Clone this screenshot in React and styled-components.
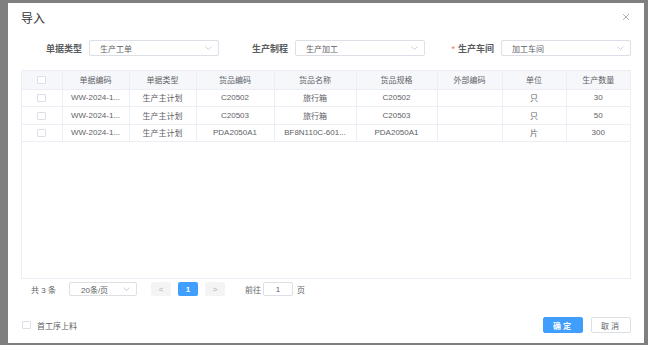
import React from 'react';
import styled, { createGlobalStyle } from 'styled-components';

const GlobalStyle = createGlobalStyle`
    html, body {
        margin: 0;
        padding: 0;
        height: 345px;
        overflow: hidden;
        background: #7f7f7f;
        font-family: "Liberation Sans", "Noto Sans CJK SC", sans-serif;
    }
    * { box-sizing: border-box; }
`;

const Overlay = styled.div`
    padding: 3px 0 0 8px;
    height: 345px;
`;

const Dialog = styled.div`
    width: 636px;
    height: 340px;
    background: #fff;
    display: flex;
    flex-direction: column;
`;

const Header = styled.div`
    height: 27px;
    padding: 0 14px 0 13px;
    display: flex;
    align-items: center;
    justify-content: space-between;
`;

const Title = styled.span`
    font-size: 12px;
    color: #303133;
    padding-top: 2px;
`;

const Close = styled.svg`
    width: 8px;
    height: 8px;
`;

const Body = styled.div`
    padding: 10px 13px 0;
`;

const FormRow = styled.div`
    display: flex;
    gap: 8px;
    height: 16px;
    margin-bottom: 14px;
`;

const FormItem = styled.div`
    display: flex;
    align-items: center;
`;

const Label = styled.label`
    width: 68px;
    padding-right: 7px;
    text-align: right;
    font-size: 9px;
    font-weight: 600;
    color: #5a5c61;
    white-space: nowrap;
`;

const Star = styled.span`
    color: #f56c6c;
    margin-right: 3px;
    font-weight: 400;
`;

const SelectBox = styled.div`
    width: ${p => p.width || 130}px;
    height: ${p => p.height || 16}px;
    border: 1px solid #dcdfe6;
    border-radius: 2px;
    display: flex;
    align-items: center;
    justify-content: space-between;
    padding: 0 6px 0 10px;
    font-size: 8px;
    color: #606266;
`;

const Chevron = () => (
    <svg width="7" height="4" viewBox="0 0 7 4">
        <polyline points="0.5,0.5 3.5,3.5 6.5,0.5" fill="none" stroke="#c0c4cc" strokeWidth="0.8" />
    </svg>
);

const TableWrap = styled.div`
    width: 610px;
    height: 209px;
    border: 1px solid #ebeef5;
`;

const Table = styled.table`
    width: 608px;
    table-layout: fixed;
    border-collapse: collapse;
    font-size: 8px;
    color: #606266;
`;

const Th = styled.th`
    height: 18px;
    background: #f5f7fa;
    font-weight: 400;
    text-align: center;
    border-right: 1px solid #ebeef5;
    border-bottom: 1px solid #ebeef5;
    white-space: nowrap;
    &:last-child { border-right: none; }
`;

const Td = styled.td`
    height: 17.5px;
    text-align: center;
    border-right: 1px solid #ebeef5;
    border-bottom: 1px solid #ebeef5;
    white-space: nowrap;
    overflow: hidden;
    &:last-child { border-right: none; }
`;

const Check = styled.span`
    display: inline-block;
    width: 9px;
    height: 8px;
    border: 1px solid #dcdfe6;
    border-radius: 1px;
    background: #fff;
    vertical-align: middle;
`;

const Pager = styled.div`
    display: flex;
    align-items: center;
    height: 14px;
    margin-top: 3px;
    padding-left: 10px;
    font-size: 8px;
    color: #606266;
`;

const Total = styled.span`
    width: 38px;
`;

const PageBtn = styled.div`
    width: 20px;
    height: 14px;
    margin-right: 7px;
    border-radius: 2px;
    display: flex;
    align-items: center;
    justify-content: center;
    font-weight: 700;
    background: ${p => (p.active ? '#409eff' : '#f4f4f5')};
    color: ${p => (p.active ? '#fff' : '#c0c4cc')};
`;

const JumpInput = styled.div`
    width: 30px;
    height: 14px;
    margin: 0 4px 0 2px;
    border: 1px solid #dcdfe6;
    border-radius: 2px;
    display: flex;
    align-items: center;
    justify-content: center;
`;

const Footer = styled.div`
    margin-top: auto;
    padding: 0 13px 10px 14px;
    display: flex;
    align-items: center;
    height: 26px;
`;

const CheckLabel = styled.label`
    display: flex;
    align-items: center;
    gap: 6px;
    font-size: 8px;
    color: #606266;
    flex: 1;
`;

const Button = styled.button`
    width: 40px;
    height: 16px;
    margin-left: 8px;
    padding: 0;
    font-family: inherit;
    font-size: 8px;
    border-radius: 2px;
    letter-spacing: 2px;
    border: 1px solid ${p => (p.primary ? '#409eff' : '#dcdfe6')};
    background: ${p => (p.primary ? '#409eff' : '#fff')};
    color: ${p => (p.primary ? '#fff' : '#606266')};
    font-weight: ${p => (p.primary ? 700 : 400)};
`;

const columns = [
    { title: '', width: 40 },
    { title: '单据编码', width: 67 },
    { title: '单据类型', width: 67 },
    { title: '货品编码', width: 78 },
    { title: '货品名称', width: 82 },
    { title: '货品规格', width: 81 },
    { title: '外部编码', width: 65 },
    { title: '单位', width: 64 },
    { title: '生产数量', width: 64 },
];

const rows = [
    ['WW-2024-1...', '生产主计划', 'C20502', '旅行箱', 'C20502', '', '只', '30'],
    ['WW-2024-1...', '生产主计划', 'C20503', '旅行箱', 'C20503', '', '只', '50'],
    ['WW-2024-1...', '生产主计划', 'PDA2050A1', 'BF8N110C-601...', 'PDA2050A1', '', '片', '300'],
];

const App = () => {
    return (
        <>
            <GlobalStyle />
            <Overlay>
                <Dialog>
                    <Header>
                        <Title>导入</Title>
                        <Close viewBox="0 0 8 8">
                            <path d="M1 1L7 7M7 1L1 7" stroke="#a8abb2" strokeWidth="0.9" />
                        </Close>
                    </Header>
                    <Body>
                        <FormRow>
                            <FormItem>
                                <Label>单据类型</Label>
                                <SelectBox>生产工单<Chevron /></SelectBox>
                            </FormItem>
                            <FormItem>
                                <Label>生产制程</Label>
                                <SelectBox>生产加工<Chevron /></SelectBox>
                            </FormItem>
                            <FormItem>
                                <Label><Star>*</Star>生产车间</Label>
                                <SelectBox>加工车间<Chevron /></SelectBox>
                            </FormItem>
                        </FormRow>
                        <TableWrap>
                            <Table>
                                <colgroup>
                                    {columns.map((c, i) => <col key={i} style={{ width: c.width }} />)}
                                </colgroup>
                                <thead>
                                    <tr>
                                        {columns.map((c, i) => (
                                            <Th key={i}>{i === 0 ? <Check /> : c.title}</Th>
                                        ))}
                                    </tr>
                                </thead>
                                <tbody>
                                    {rows.map((r, i) => (
                                        <tr key={i}>
                                            <Td><Check /></Td>
                                            {r.map((v, j) => <Td key={j}>{v}</Td>)}
                                        </tr>
                                    ))}
                                </tbody>
                            </Table>
                        </TableWrap>
                        <Pager>
                            <Total>共 3 条</Total>
                            <SelectBox width={68} height={14} style={{ marginRight: 14, paddingLeft: 11 }}>
                                20条/页<Chevron />
                            </SelectBox>
                            <PageBtn>&lt;</PageBtn>
                            <PageBtn active>1</PageBtn>
                            <PageBtn>&gt;</PageBtn>
                            <span style={{ marginLeft: 13 }}>前往</span>
                            <JumpInput>1</JumpInput>
                            <span>页</span>
                        </Pager>
                    </Body>
                    <Footer>
                        <CheckLabel><Check />首工序上料</CheckLabel>
                        <Button primary>确定</Button>
                        <Button>取消</Button>
                    </Footer>
                </Dialog>
            </Overlay>
        </>
    );
};

export default App;
